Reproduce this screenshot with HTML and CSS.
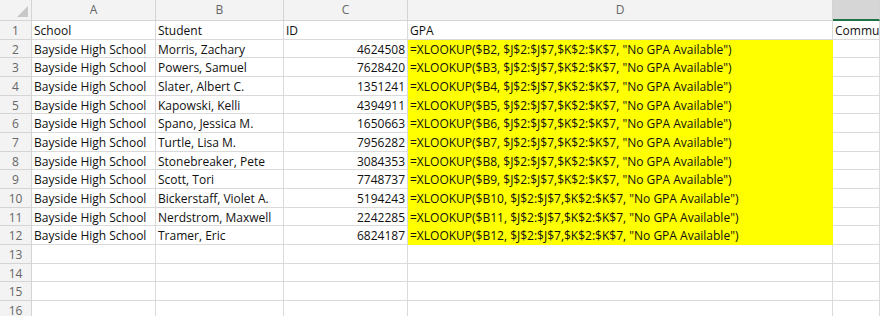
FILE: index.html
```html
<!DOCTYPE html>
<html lang="en">
<head>
    <meta charset="UTF-8">
    <title>GPA lookup</title>
    <link rel="stylesheet" href="styles.css">
</head>
<body>
    <div class="sheet">
        <!-- column headers -->
        <div class="corner"><span class="tri"></span></div>
        <div class="colhead">A</div>
        <div class="colhead">B</div>
        <div class="colhead">C</div>
        <div class="colhead">D</div>
        <div class="colhead sel"></div>

        <div class="rowhead">1</div>
        <div class="cell">School</div>
        <div class="cell">Student</div>
        <div class="cell">ID</div>
        <div class="cell">GPA</div>
        <div class="cell">Commu</div>

        <div class="rowhead">2</div>
        <div class="cell">Bayside High School</div>
        <div class="cell">Morris, Zachary</div>
        <div class="cell num">4624508</div>
        <div class="cell hl">=XLOOKUP($B2, $J$2:$J$7,$K$2:$K$7, "No GPA Available")</div>
        <div class="cell"></div>

        <div class="rowhead">3</div>
        <div class="cell">Bayside High School</div>
        <div class="cell">Powers, Samuel</div>
        <div class="cell num">7628420</div>
        <div class="cell hl">=XLOOKUP($B3, $J$2:$J$7,$K$2:$K$7, "No GPA Available")</div>
        <div class="cell"></div>

        <div class="rowhead">4</div>
        <div class="cell">Bayside High School</div>
        <div class="cell">Slater, Albert C.</div>
        <div class="cell num">1351241</div>
        <div class="cell hl">=XLOOKUP($B4, $J$2:$J$7,$K$2:$K$7, "No GPA Available")</div>
        <div class="cell"></div>

        <div class="rowhead">5</div>
        <div class="cell">Bayside High School</div>
        <div class="cell">Kapowski, Kelli</div>
        <div class="cell num">4394911</div>
        <div class="cell hl">=XLOOKUP($B5, $J$2:$J$7,$K$2:$K$7, "No GPA Available")</div>
        <div class="cell"></div>

        <div class="rowhead">6</div>
        <div class="cell">Bayside High School</div>
        <div class="cell">Spano, Jessica M.</div>
        <div class="cell num">1650663</div>
        <div class="cell hl">=XLOOKUP($B6, $J$2:$J$7,$K$2:$K$7, "No GPA Available")</div>
        <div class="cell"></div>

        <div class="rowhead">7</div>
        <div class="cell">Bayside High School</div>
        <div class="cell">Turtle, Lisa M.</div>
        <div class="cell num">7956282</div>
        <div class="cell hl">=XLOOKUP($B7, $J$2:$J$7,$K$2:$K$7, "No GPA Available")</div>
        <div class="cell"></div>

        <div class="rowhead">8</div>
        <div class="cell">Bayside High School</div>
        <div class="cell">Stonebreaker, Pete</div>
        <div class="cell num">3084353</div>
        <div class="cell hl">=XLOOKUP($B8, $J$2:$J$7,$K$2:$K$7, "No GPA Available")</div>
        <div class="cell"></div>

        <div class="rowhead">9</div>
        <div class="cell">Bayside High School</div>
        <div class="cell">Scott, Tori</div>
        <div class="cell num">7748737</div>
        <div class="cell hl">=XLOOKUP($B9, $J$2:$J$7,$K$2:$K$7, "No GPA Available")</div>
        <div class="cell"></div>

        <div class="rowhead">10</div>
        <div class="cell">Bayside High School</div>
        <div class="cell">Bickerstaff, Violet A.</div>
        <div class="cell num">5194243</div>
        <div class="cell hl">=XLOOKUP($B10, $J$2:$J$7,$K$2:$K$7, "No GPA Available")</div>
        <div class="cell"></div>

        <div class="rowhead">11</div>
        <div class="cell">Bayside High School</div>
        <div class="cell">Nerdstrom, Maxwell</div>
        <div class="cell num">2242285</div>
        <div class="cell hl">=XLOOKUP($B11, $J$2:$J$7,$K$2:$K$7, "No GPA Available")</div>
        <div class="cell"></div>

        <div class="rowhead">12</div>
        <div class="cell">Bayside High School</div>
        <div class="cell">Tramer, Eric</div>
        <div class="cell num">6824187</div>
        <div class="cell hl">=XLOOKUP($B12, $J$2:$J$7,$K$2:$K$7, "No GPA Available")</div>
        <div class="cell"></div>

        <div class="rowhead">13</div>
        <div class="cell"></div><div class="cell"></div><div class="cell"></div><div class="cell"></div><div class="cell"></div>
        <div class="rowhead">14</div>
        <div class="cell"></div><div class="cell"></div><div class="cell"></div><div class="cell"></div><div class="cell"></div>
        <div class="rowhead">15</div>
        <div class="cell"></div><div class="cell"></div><div class="cell"></div><div class="cell"></div><div class="cell"></div>
        <div class="rowhead">16</div>
        <div class="cell"></div><div class="cell"></div><div class="cell"></div><div class="cell"></div><div class="cell"></div>
    </div>
</body>
</html>
```

FILE: styles.css
```css
*{margin:0;padding:0;box-sizing:border-box;}
html,body{width:100%;height:100%;background:#fff;overflow:hidden;}
body{font-family:"Open Sans","Noto Sans",sans-serif;font-size:12px;color:#111;}

.sheet{
    display:grid;
    grid-template-columns:32px 124px 128px 124px 425px 1fr;
    grid-template-rows:21px;
    grid-auto-rows:18.67px;
}

/* headers */
.corner,.colhead,.rowhead{
    background:#f3f3f3;
    color:#666;
    border-right:1px solid #d4d4d4;
    border-bottom:1px solid #d4d4d4;
}
.corner{
    display:flex;
    justify-content:flex-end;
    align-items:flex-end;
    padding:0 3px 3px 0;
}
.corner .tri{
    width:11px;
    height:11px;
    background:#c8c8c8;
    clip-path:polygon(100% 0,100% 100%,0 100%);
}
.colhead{
    text-align:center;
    line-height:20px;
}
.colhead.sel{
    background:#d6d6d6;
    border-bottom:2px solid #217346;
}
.rowhead{
    text-align:center;
    line-height:18px;
    padding-top:1px;
}

/* cells */
.cell{
    border-right:1px solid #dadada;
    border-bottom:1px solid #dadada;
    padding:1px 2px 0;
    line-height:17px;
    white-space:nowrap;
    overflow:hidden;
}
.cell.num{text-align:right;}
.cell.hl{background:#ffff00;border-color:#ffff00;}
```
